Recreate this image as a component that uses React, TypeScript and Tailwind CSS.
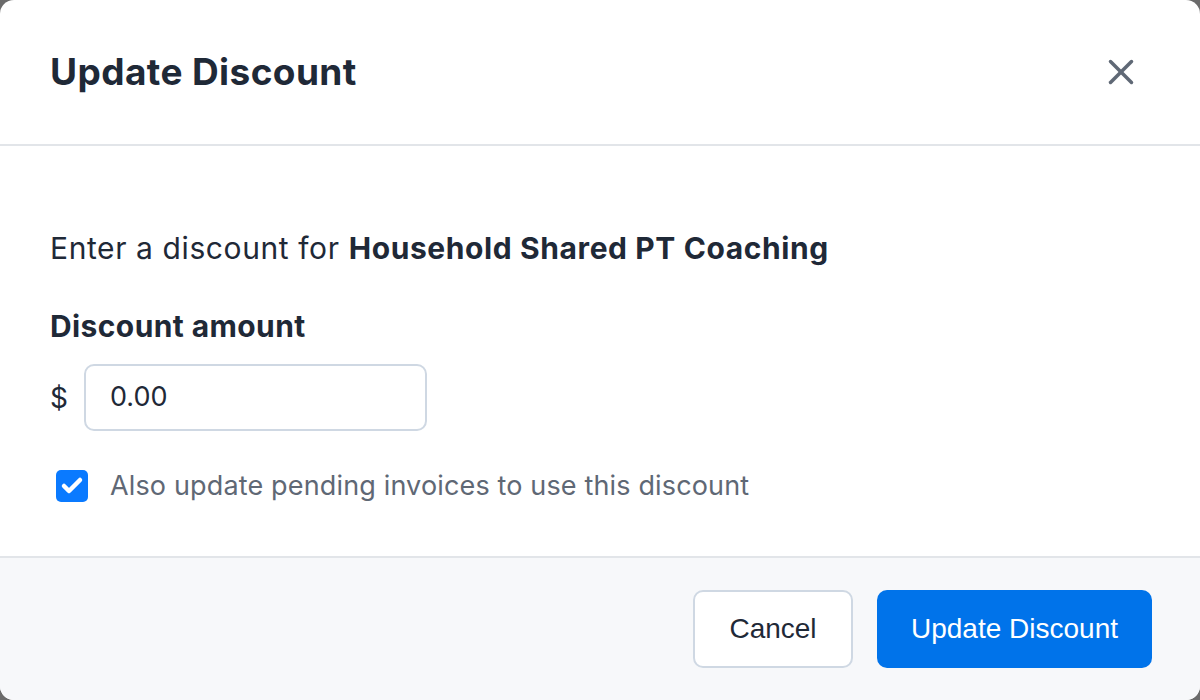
import { X, Check } from "lucide-react";

export default function App() {
  return (
    <div className="h-[700px] w-[1200px] bg-[#6b6b6b]" style={{ fontFamily: "Inter, 'Noto Sans', sans-serif" }}>
      <div className="flex h-full flex-col overflow-hidden rounded-[14px] bg-white">
        {/* header */}
        <div className="flex h-[146px] shrink-0 items-center justify-between border-b-2 border-[#e2e5e9] pl-[50px] pr-[58px]">
          <h2 className="text-[37px] font-bold tracking-[0.4px] text-[#1f2937]">Update Discount</h2>
          <button className="text-[#5f6875]">
            <X className="h-[42px] w-[42px]" strokeWidth={2} />
          </button>
        </div>

        {/* body */}
        <div className="flex flex-1 flex-col px-[50px] pt-[84px]">
          <p className="text-[30px] leading-[36px] tracking-[0.6px] text-[#1f2937]">
            Enter a discount for <span className="font-bold">Household Shared PT Coaching</span>
          </p>
          <label className="mt-[42px] text-[30px] font-bold leading-[36px] tracking-[0.4px] text-[#1f2937]">Discount amount</label>
          <div className="mt-[20px] flex items-center gap-[16px]">
            <span className="text-[28px] text-[#1f2937]">$</span>
            <div className="flex h-[67px] w-[343px] items-center rounded-[10px] border-2 border-[#cfd8e3] px-[24px] text-[27px] text-[#1f2937]">
              0.00
            </div>
          </div>
          <div className="mt-[35px] flex items-center gap-[22px] pl-[6px]">
            <span className="flex h-[32px] w-[32px] items-center justify-center rounded-[5px] bg-[#0a7aff] text-white">
              <Check className="h-[24px] w-[24px]" strokeWidth={4.5} />
            </span>
            <span className="text-[27px] tracking-[0.15px] text-[#5f6875]">Also update pending invoices to use this discount</span>
          </div>
        </div>

        {/* footer */}
        <div className="flex h-[144px] shrink-0 items-center justify-end gap-[24px] border-t-2 border-[#e2e5e9] bg-[#f7f8fa] pr-[48px]" style={{ fontFamily: "'Liberation Sans', Arial, sans-serif" }}>
          <button className="h-[78px] w-[160px] rounded-[10px] border-2 border-[#cfd8e3] bg-white text-[28px] text-[#1f2937]">
            Cancel
          </button>
          <button className="h-[78px] w-[275px] rounded-[10px] bg-[#0073ea] text-[28px] text-white">
            Update Discount
          </button>
        </div>
      </div>
    </div>
  );
}
